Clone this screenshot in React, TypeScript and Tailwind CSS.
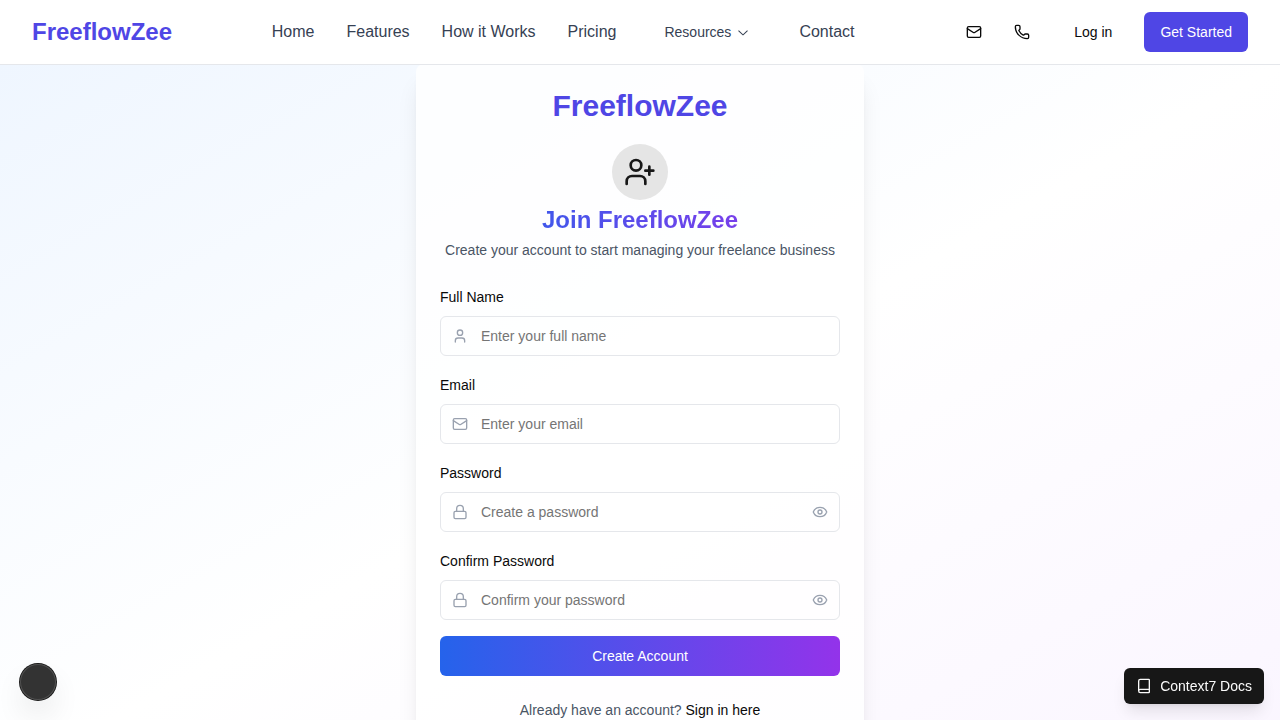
import { useState } from 'react';
import type { ReactNode } from 'react';
import { Book, Eye, EyeOff, Lock, Mail, Phone, User, UserPlus } from 'lucide-react';
import { RxChevronDown } from 'react-icons/rx';

const links = ['Home', 'Features', 'How it Works', 'Pricing'];

function Header() {
  return (
    <header className="sticky top-0 z-10 -mb-px border-b border-gray-200 bg-white">
      <div className="flex h-16 items-center justify-between px-8">
        <a href="#" className="text-2xl font-bold text-[#4f46e5]">FreeflowZee</a>
        <nav className="flex items-center gap-8 text-gray-700">
          {links.map((l) => (
            <a key={l} href="#">{l}</a>
          ))}
          <button type="button" className="flex h-10 items-center px-4 text-sm">
            Resources
            <RxChevronDown className="ml-1 size-4" />
          </button>
          <a href="#">Contact</a>
        </nav>
        <div className="flex items-center gap-4 text-sm text-neutral-950">
          <div className="flex gap-2">
            <button type="button" aria-label="Email us" className="px-3 py-2.5"><Mail className="size-4" /></button>
            <button type="button" aria-label="Call us" className="px-3 py-2.5"><Phone className="size-4" /></button>
          </div>
          <a href="#" className="px-4 py-2.5">Log in</a>
          <a href="#" className="rounded-md bg-[#4f46e5] px-4 py-2.5 text-white">Get Started</a>
        </div>
      </div>
    </header>
  );
}

type FieldProps = { id: string; label: string; placeholder: string; icon: ReactNode; type?: string };

function Field({ id, label, placeholder, icon, type = 'text' }: FieldProps) {
  const [shown, setShown] = useState(false);
  const secret = type === 'password';
  return (
    <div className="flex flex-col gap-2.5">
      <label htmlFor={id} className="text-sm leading-[18px] text-neutral-950">{label}</label>
      <div className="flex h-10 items-center rounded-md border border-gray-200 px-[11px] text-gray-400 focus-within:border-indigo-500">
        {icon}
        <input
          id={id}
          type={secret && shown ? 'text' : type}
          placeholder={placeholder}
          className="h-full min-w-0 flex-1 bg-transparent px-[13px] text-sm text-neutral-950 outline-none placeholder:text-[#757575]"
        />
        {secret && (
          <button type="button" aria-label={shown ? 'Hide password' : 'Show password'} onClick={() => setShown(!shown)}>
            {shown ? <EyeOff className="size-4" /> : <Eye className="size-4" />}
          </button>
        )}
      </div>
    </div>
  );
}

export default function App() {
  return (
    <div className="flex min-h-screen flex-col bg-white font-['Liberation_Sans',Arial,sans-serif] antialiased">
      <Header />
      <main className="flex min-h-screen items-start justify-center bg-linear-to-br/srgb from-[#eff6ff] via-white to-[#faf5ff]">
        <section className="w-full max-w-md rounded-lg bg-white/80 p-6 shadow-xl">
          <div className="flex flex-col items-center text-center">
            <a href="#" className="text-3xl font-bold text-[#4f46e5]">FreeflowZee</a>
            <div className="mt-5 flex size-14 items-center justify-center rounded-full bg-[#e5e5e5] text-neutral-900">
              <UserPlus className="size-8" />
            </div>
            <h1 className="mt-1 w-full bg-linear-to-r/srgb from-[#2563eb] to-[#9333ea] bg-clip-text text-2xl font-bold text-transparent">Join FreeflowZee</h1>
            <p className="mt-1 text-sm text-gray-600">Create your account to start managing your freelance business</p>
          </div>
          <form className="mt-7" onSubmit={(e) => e.preventDefault()}>
            <div className="flex flex-col gap-5">
              <Field id="name" label="Full Name" placeholder="Enter your full name" icon={<User className="size-4" />} />
              <Field id="email" label="Email" type="email" placeholder="Enter your email" icon={<Mail className="size-4" />} />
              <Field id="password" label="Password" type="password" placeholder="Create a password" icon={<Lock className="size-4" />} />
              <Field id="confirm" label="Confirm Password" type="password" placeholder="Confirm your password" icon={<Lock className="size-4" />} />
            </div>
            <button type="submit" className="mt-4 h-10 w-full rounded-md bg-linear-to-r/srgb from-[#2563eb] to-[#9333ea] text-sm text-white">Create Account</button>
          </form>
          <p className="mt-6 text-center text-sm text-gray-600">
            Already have an account? <a href="#" className="text-neutral-950">Sign in here</a>
          </p>
        </section>
      </main>
      <button type="button" aria-label="Open tools" className="fixed bottom-5 left-5 size-9 rounded-full bg-[#333] shadow-[0_0_0_1px_#171717,inset_0_0_0_1px_#505050,0_16px_32px_-8px_#0000003d]" />
      <button type="button" className="fixed right-4 bottom-4 flex h-9 items-center gap-2 rounded-md bg-neutral-900 px-3 text-sm text-neutral-50 shadow-lg">
        <Book className="size-4" />
        Context7 Docs
      </button>
    </div>
  );
}
